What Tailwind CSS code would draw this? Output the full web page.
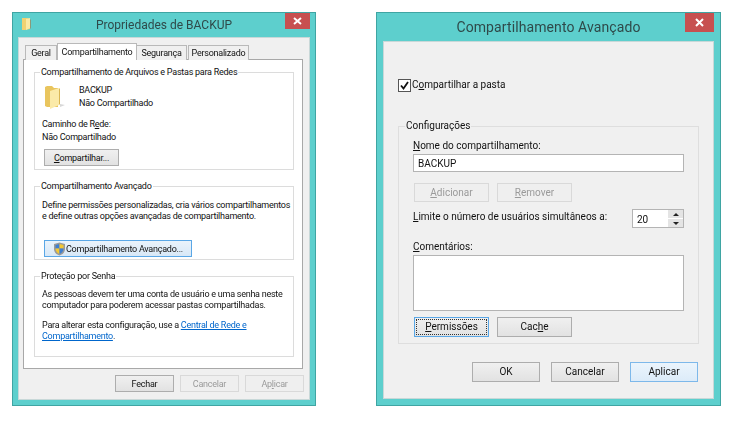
<!DOCTYPE html>
<html lang="en">
<head>
    <meta charset="UTF-8">
    <title>Propriedades de BACKUP</title>
    <script src="https://cdn.jsdelivr.net/npm/@tailwindcss/browser@4"></script>
</head>
<body class="bg-white overflow-hidden font-['Roboto',sans-serif] text-[9px] tracking-[-0.25px] leading-[12px] text-[#111] whitespace-nowrap">
<div class="flex gap-[60px] pl-[12px] pt-[12px] blur-[0.3px]">

    <!-- Properties window -->
    <div class="w-[304px] h-[394px] bg-[#5dcfcd] border border-[#3fa5a3] flex flex-col px-[5px] pb-[5px]">
        <div class="relative h-[24px] flex items-center justify-center shrink-0">
            <svg class="absolute left-[3px] top-[3px]" width="11" height="15" viewBox="0 0 11 15">
                <path d="M1 2h5l3 1v10l-5 1H1z" fill="#f0d272"/>
                <path d="M5 3l4 -1v10l-4 2z" fill="#fbe9a4"/>
                <path d="M9 3l1 1v8l-1 1z" fill="#8a9a7a"/>
            </svg>
            <span class="text-[12px] text-[#2f4a4a] tracking-normal">Propriedades de BACKUP</span>
            <div class="absolute right-0 top-0 w-[25px] h-[16px] bg-[#c75050] flex items-center justify-center">
                <svg width="9" height="8" viewBox="0 0 9 8"><path d="M1 1l7 6M8 1L1 7" stroke="#fff" stroke-width="2"/></svg>
            </div>
        </div>
        <div class="flex-1 bg-[#f0f0f0] border border-[#c8d8d8] pl-[4px] pr-[6px] pt-[5px]">
            <!-- tabs -->
            <div class="flex items-end pl-[2px] h-[17px] relative z-10 -mb-px">
                <div class="w-[32px] h-[15px] bg-[#f0f0f0] border border-b-0 border-[#b9b9b9] flex items-center justify-center">Geral</div>
                <div class="w-[80px] h-[17px] bg-white border border-b-0 border-[#b9b9b9] flex items-center justify-center">Compartilhamento</div>
                <div class="w-[50px] h-[15px] bg-[#f0f0f0] border border-b-0 border-l-0 border-[#b9b9b9] flex items-center justify-center">Segurança</div>
                <div class="w-[61px] h-[15px] ml-px bg-[#f0f0f0] border border-b-0 border-[#b9b9b9] flex items-center justify-center">Personalizado</div>
            </div>
            <div class="h-[310px] bg-white border border-[#a8a8a8] pl-[10px] pr-[8px] pt-[6px] flex flex-col">
                <fieldset class="h-[104px] min-w-0 border border-[#dcdcdc] px-[8px] shrink-0">
                    <legend class="ml-[-3px] px-[1px]">Compartilhamento de Arquivos e Pastas para Redes</legend>
                    <div class="flex h-[26px] mt-[6px] ml-[1px]">
                        <svg width="22" height="26" viewBox="0 0 22 26" class="shrink-0">
                            <path d="M1 3l2-1h5l2 2h4v19H3l-2-1z" fill="#e9c55e"/>
                            <path d="M6 7l9-3v17l-9 4z" fill="#fbeaa8"/>
                            <path d="M15 4l1 1v15l-1 1z" fill="#d9b654"/>
                            <path d="M16 20l5 1-5 2z" fill="#d8d8d8"/>
                        </svg>
                        <div class="ml-[13px]">
                            <div class="mb-[1px]">BACKUP</div>
                            <div>Não Compartilhado</div>
                        </div>
                    </div>
                    <div class="mt-[8px] ml-[-1px]">Caminho de R<u>e</u>de:</div>
                    <div class="mt-[1px] ml-[-1px]">Não Compartilhado</div>
                    <button class="mt-[6px] ml-[1px] w-[75px] h-[17px] bg-linear-to-b from-[#f0f0f0] to-[#e2e2e2] border border-[#adadad] flex items-center justify-center"><span><u>C</u>ompartilhar...</span></button>
                </fieldset>
                <fieldset class="mt-[10px] h-[80px] min-w-0 border border-[#dcdcdc] px-[8px] shrink-0">
                    <legend class="ml-[-3px] px-[1px]">Compartilhamento Avançado</legend>
                    <p class="mt-[8px] ml-[-1px] leading-[11px]">Define permissões personalizadas, cria vários compartilhamentos<br>e define outras opções avançadas de compartilhamento.</p>
                    <button class="mt-[18px] ml-[1px] w-[148px] h-[17px] bg-linear-to-b from-[#eaf3fb] to-[#d8e8f7] border border-[#5aa7e6] flex items-center pl-[8px]">
                        <svg width="13" height="14" viewBox="0 0 13 14" class="shrink-0">
                            <path d="M6.5 0.5L12 2v5c0 3.5-2.5 5.500-5.500 6.500C3.500 12.500 1 10.500 1 7V2z" fill="#9a9a9a"/>
                            <path d="M6.500 2L2.500 3v3.500h4z" fill="#3f7fd0"/>
                            <path d="M6.500 2l4 1v3.500h-4z" fill="#f3c733"/>
                            <path d="M2.500 6.500h4V12c-2-1-4-2.500-4-5.500z" fill="#f3c733"/>
                            <path d="M10.500 6.500h-4V12c2-1 4-2.500 4-5.500z" fill="#3f7fd0"/>
                        </svg>
                        <span>Compartilhamento Avançado...</span>
                    </button>
                </fieldset>
                <fieldset class="mt-[10px] h-[87px] min-w-0 border border-[#dcdcdc] px-[8px] shrink-0">
                    <legend class="ml-[-3px] px-[1px]">Proteção por Senha</legend>
                    <p class="mt-[7px] ml-[-1px] leading-[11px]">As pessoas devem ter uma conta de usuário e uma senha neste<br>computador para poderem acessar pastas compartilhadas.</p>
                    <p class="mt-[9px] ml-[-1px] leading-[11px]">Para alterar esta configuração, use a <a class="text-[#0066cc] underline">Central de Rede e<br>Compartilhamento</a>.</p>
                </fieldset>
            </div>
            <div class="flex justify-end gap-[6px] mt-[6px] mr-[-1px]">
                <button class="w-[59px] h-[17px] bg-linear-to-b from-[#f0f0f0] to-[#e2e2e2] border border-[#adadad]">Fechar</button>
                <button class="w-[59px] h-[17px] bg-[#efefef] border border-[#d9d9d9] text-[#9a9a9a]">Cancelar</button>
                <button class="w-[59px] h-[17px] bg-[#efefef] border border-[#d9d9d9] text-[#9a9a9a]">Ap<u>l</u>icar</button>
            </div>
        </div>
    </div>

    <!-- Advanced sharing window -->
    <div class="w-[345px] h-[394px] bg-[#5dcfcd] border border-[#3fa5a3] flex flex-col px-[6px] pb-[6px] text-[10px] tracking-normal leading-[14px]">
        <div class="relative h-[28px] flex items-center justify-center shrink-0">
            <span class="text-[14px] text-[#2f4a4a] tracking-[0.1px]">Compartilhamento Avançado</span>
            <div class="absolute right-0 top-0 w-[29px] h-[19px] bg-[#c75050] flex items-center justify-center">
                <svg width="9" height="9" viewBox="0 0 9 9"><path d="M1 1l7 7M8 1L1 8" stroke="#fff" stroke-width="2"/></svg>
            </div>
        </div>
        <div class="flex-1 bg-[#f0f0f0] border border-[#c8d8d8] px-[14px]">
            <label class="flex items-center mt-[36px] h-[14px]">
                <span class="w-[13px] h-[13px] bg-white border border-[#555] flex items-center justify-center mr-[1px]">
                    <svg width="9" height="9" viewBox="0 0 9 9"><path d="M1 4.500l2.500 3L8 1" fill="none" stroke="#111" stroke-width="1.800"/></svg>
                </span>
                <span>C<u>o</u>mpartilhar a pasta</span>
            </label>
            <fieldset class="mt-[27px] h-[225px] min-w-0 border border-[#dedede] px-[14px]">
                <legend class="ml-[-8px] px-[1px]">Configurações</legend>
                <div class="mt-[6px]"><u>N</u>ome do compartilhamento:</div>
                <input class="block mt-[1px] w-[271px] h-[18px] bg-white border border-[#b4b4b4] px-[4px] outline-none" value="BACKUP">
                <div class="flex gap-[8px] mt-[11px] ml-[1px]">
                    <button class="w-[75px] h-[19px] bg-[#efefef] border border-[#d9d9d9] text-[#9a9a9a]"><u>A</u>dicionar</button>
                    <button class="w-[75px] h-[19px] bg-[#efefef] border border-[#d9d9d9] text-[#9a9a9a]"><u>R</u>emover</button>
                </div>
                <div class="flex justify-between items-start mt-[7px] w-[271px]">
                    <span class="pt-[1px]"><u>L</u>imite o número de usuários simultâneos a:</span>
                    <div class="flex w-[52px] h-[19px] bg-white border border-[#b4b4b4]">
                        <span class="flex-1 pl-[4px] leading-[19px]">20</span>
                        <div class="w-[15px] flex flex-col gap-px">
                            <div class="flex-1 bg-[#e4e4e4] flex items-center justify-center"><svg width="6" height="3" viewBox="0 0 6 3"><path d="M3 0l3 3H0z" fill="#222"/></svg></div>
                            <div class="flex-1 bg-[#e4e4e4] flex items-center justify-center"><svg width="6" height="3" viewBox="0 0 6 3"><path d="M0 0h6L3 3z" fill="#222"/></svg></div>
                        </div>
                    </div>
                </div>
                <div class="mt-[12px]"><u>C</u>omentários:</div>
                <div class="mt-[1px] w-[271px] h-[56px] bg-white border border-[#b4b4b4]"></div>
                <div class="flex gap-[8px] mt-[6px] ml-[1px]">
                    <button class="w-[75px] h-[20px] bg-linear-to-b from-[#f0f0f0] to-[#e2e2e2] border border-[#5aa7e6] p-px"><span class="flex h-full items-center justify-center border border-dotted border-[#333]"><span><u>P</u>ermissões</span></span></button>
                    <button class="w-[75px] h-[20px] bg-linear-to-b from-[#f0f0f0] to-[#e2e2e2] border border-[#adadad]">Cac<u>h</u>e</button>
                </div>
            </fieldset>
            <div class="flex justify-end gap-[11px] mt-[18px] pr-[1px]">
                <button class="w-[68px] h-[20px] bg-linear-to-b from-[#f0f0f0] to-[#e2e2e2] border border-[#adadad]">OK</button>
                <button class="w-[68px] h-[20px] bg-linear-to-b from-[#f0f0f0] to-[#e2e2e2] border border-[#adadad]">Cancelar</button>
                <button class="w-[68px] h-[20px] bg-linear-to-b from-[#ebf4fc] to-[#dcebf9] border border-[#7db8ea]">Aplicar</button>
            </div>
        </div>
    </div>
</div>
</body>
</html>
